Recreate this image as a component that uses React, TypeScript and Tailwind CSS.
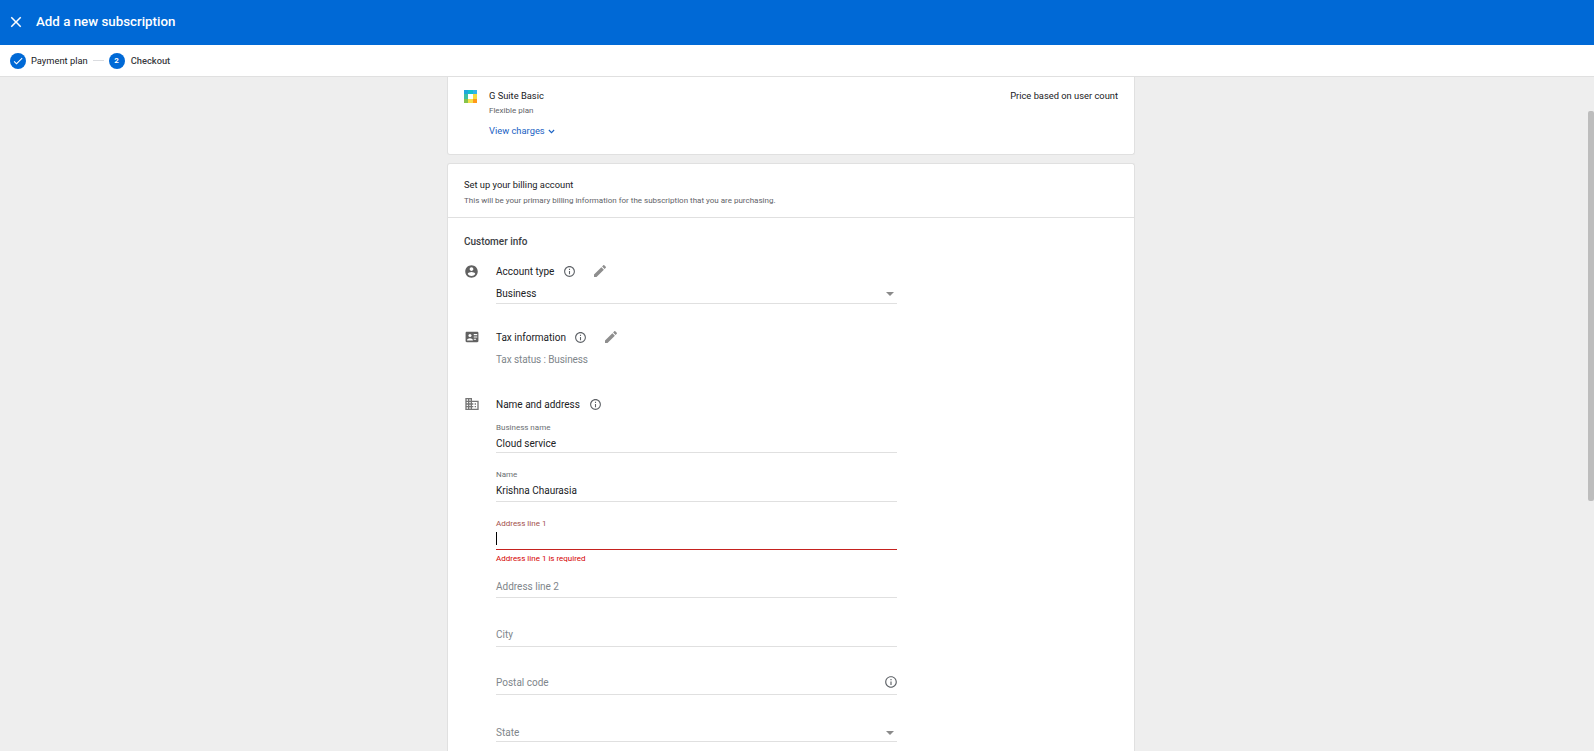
import React from 'react';

const Icon = ({ d, className }: { d: string; className: string }) => (
  <svg viewBox="0 0 24 24" className={className} fill="currentColor">
    <path d={d} />
  </svg>
);

const INFO = 'M11 7h2v2h-2zm0 4h2v6h-2zm1-9C6.48 2 2 6.48 2 12s4.48 10 10 10 10-4.48 10-10S17.52 2 12 2zm0 18c-4.41 0-8-3.59-8-8s3.59-8 8-8 8 3.59 8 8-3.59 8-8 8z';
const EDIT = 'M3 17.25V21h3.75L17.81 9.94l-3.75-3.75L3 17.25zM20.71 7.04c.39-.39.39-1.02 0-1.41l-2.34-2.34c-.39-.39-1.02-.39-1.41 0l-1.83 1.83 3.75 3.75 1.83-1.83z';
const ACCOUNT = 'M12 2C6.48 2 2 6.48 2 12s4.48 10 10 10 10-4.48 10-10S17.52 2 12 2zm0 3c1.66 0 3 1.34 3 3s-1.34 3-3 3-3-1.34-3-3 1.34-3 3-3zm0 14.2c-2.5 0-4.71-1.28-6-3.22.03-1.99 4-3.08 6-3.08 1.99 0 5.97 1.09 6 3.08-1.29 1.94-3.5 3.22-6 3.22z';
const DOMAIN = 'M12 7V3H2v18h20V7H12zM6 19H4v-2h2v2zm0-4H4v-2h2v2zm0-4H4V9h2v2zm0-4H4V5h2v2zm4 12H8v-2h2v2zm0-4H8v-2h2v2zm0-4H8V9h2v2zm0-4H8V5h2v2zm10 12h-8v-2h2v-2h-2v-2h2v-2h-2V9h8v10zm-2-8h-2v2h2v-2zm0 4h-2v2h2v-2z';

const Info = ({ className = '' }: { className?: string }) => (
  <Icon d={INFO} className={`w-[13px] h-[13px] text-[#5f6368] shrink-0 ${className}`} />
);

const Edit = ({ className = '' }: { className?: string }) => (
  <Icon d={EDIT} className={`w-[16px] h-[16px] text-[#8e8e8e] shrink-0 ${className}`} />
);

const Caret = () => (
  <svg viewBox="0 0 10 5" className="w-[8px] h-[4px] text-[#8a8a8a] mr-[3px] mt-[2px]" fill="currentColor">
    <path d="M0 0h10L5 5z" />
  </svg>
);

const ContactIcon = () => (
  <svg viewBox="0 0 24 24" className="w-[14px] h-[14px] text-[#616161] ml-px mt-[3px]" fill="currentColor">
    <path d="M21 3H3c-1.1 0-2 .9-2 2v14c0 1.1.9 2 2 2h18c1.1 0 2-.9 2-2V5c0-1.1-.9-2-2-2z" />
    <circle cx="8.5" cy="9.5" r="2.6" fill="#fff" />
    <path d="M3.5 17.5c0-2 3.3-3.2 5-3.2s5 1.2 5 3.2v.5h-10zM15 7h6v1.8h-6zM15 11h6v1.8h-6zM15 15h4v1.8h-4z" fill="#fff" />
  </svg>
);

const Logo = () => (
  <svg viewBox="0 0 13 13" className="w-[13px] h-[13px] mt-[1px] shrink-0">
    <rect x="0" y="0" width="4" height="4" fill="#1ea7dc" />
    <rect x="4" y="0" width="5" height="4" fill="#14c0cc" />
    <rect x="9" y="0" width="4" height="4" fill="#35b3ea" />
    <rect x="0" y="4" width="4" height="5" fill="#3dbfa2" />
    <rect x="4" y="4" width="5" height="5" fill="#ffffff" />
    <rect x="9" y="4" width="4" height="5" fill="#f8dc3f" />
    <rect x="0" y="9" width="4" height="4" fill="#86c34a" />
    <rect x="4" y="9" width="5" height="4" fill="#f5e04a" />
    <rect x="9" y="9" width="4" height="4" fill="#ff981a" />
  </svg>
);

const Field = ({
  label,
  value,
  placeholder,
  right,
  className = '',
  textClassName = 'bottom-[2px]',
}: {
  label?: string;
  value?: string;
  placeholder?: string;
  right?: React.ReactNode;
  className?: string;
  textClassName?: string;
}) => (
  <div className={`w-[401px] border-b border-[#e0e0e0] relative ${className}`}>
    {label && <div className="absolute left-0 top-0 text-[8px] leading-[11px] text-[#6b6f73]">{label}</div>}
    <div className={`absolute left-0 right-0 flex items-center justify-between h-[14px] ${textClassName}`}>
      {value && <span className="text-[10px] text-[#202124]">{value}</span>}
      {placeholder && <span className="text-[10px] text-[#80868b]">{placeholder}</span>}
      {right}
    </div>
  </div>
);

export default function App() {
  return (
    <div className="h-[751px] w-[1594px] overflow-hidden flex flex-col bg-[#eeeeee] relative font-['Roboto',sans-serif]">
      <header className="h-[45px] bg-[#0069d6] flex items-center shrink-0 pb-[2px]">
        <svg viewBox="0 0 24 24" className="w-[18px] h-[18px] ml-[7px] text-white" fill="currentColor">
          <path d="M19 6.41 17.59 5 12 10.59 6.41 5 5 6.41 10.59 12 5 17.59 6.41 19 12 13.41 17.59 19 19 17.59 13.41 12z" />
        </svg>
        <h1 className="ml-[11px] text-[13.33px] font-medium text-white">Add a new subscription</h1>
      </header>

      <nav className="h-[32px] bg-white border-b border-[#e0e0e0] flex items-center shrink-0 pl-[10px]">
        <span className="w-[16px] h-[16px] rounded-full bg-[#0069d6] flex items-center justify-center">
          <svg viewBox="0 0 24 24" className="w-[12px] h-[12px] text-white" fill="currentColor">
            <path d="M9 16.17 4.83 12l-1.42 1.41L9 19 21 7l-1.41-1.41z" />
          </svg>
        </span>
        <span className="ml-[5px] text-[9.33px] text-[#202124]">Payment plan</span>
        <span className="ml-[5px] w-[11px] h-px bg-[#dadce0]" />
        <span className="ml-[5px] w-[16px] h-[16px] rounded-full bg-[#0069d6] flex items-center justify-center text-[8px] font-bold text-white">2</span>
        <span className="ml-[6px] text-[9.33px] font-medium text-[#3c4043]">Checkout</span>
      </nav>

      <main className="flex-1 overflow-hidden flex flex-col items-center pr-[12px]">
        <div className="w-[688px]">
          <section className="h-[78px] bg-white border-x border-b border-[#e0e0e0] rounded-b-[3px] px-[16px] pt-[12px] flex justify-between">
            <div className="flex">
              <Logo />
              <div className="ml-[12px]">
                <div className="text-[9.33px] leading-[14px] text-[#202124]">G Suite Basic</div>
                <div className="mt-[2px] text-[8px] leading-[12px] text-[#5f6368]">Flexible plan</div>
                <div className="mt-[7px] flex items-center text-[9.33px] leading-[14px] text-[#1a62c4]">
                  View charges
                  <svg viewBox="0 0 24 24" className="ml-[2px] w-[9px] h-[9px]" fill="none" stroke="currentColor" strokeWidth="3">
                    <path d="m5 8 7 7 7-7" />
                  </svg>
                </div>
              </div>
            </div>
            <div className="text-[9.33px] leading-[14px] text-[#202124]">Price based on user count</div>
          </section>

          <section className="mt-[8px] bg-white border-x border-t border-[#e0e0e0] rounded-t-[3px]">
            <div className="h-[54px] border-b border-[#e0e0e0] px-[16px] pt-[14px]">
              <div className="text-[9.33px] leading-[14px] text-[#202124]">Set up your billing account</div>
              <div className="mt-[3px] text-[8px] leading-[12px] text-[#5f6368]">
                This will be your primary billing information for the subscription that you are purchasing.
              </div>
            </div>

            <div className="px-[16px] pt-[17px]">
              <div className="text-[10px] leading-[14px] font-medium text-[#3c4043]">Customer info</div>

              <div className="flex mt-[12px]">
                <div className="w-[32px] shrink-0">
                  <Icon d={ACCOUNT} className="w-[15px] h-[15px] text-[#616161] mt-[3px]" />
                </div>
                <div>
                  <div className="flex items-center h-[20px]">
                    <span className="text-[10px] text-[#202124]">Account type</span>
                    <Info className="ml-[9px]" />
                    <Edit className="ml-[16px]" />
                  </div>
                  <Field value="Business" right={<Caret />} className="h-[20px] mt-[3px]" textClassName="bottom-[3px]" />
                </div>
              </div>

              <div className="flex mt-[23px]">
                <div className="w-[32px] shrink-0">
                  <ContactIcon />
                </div>
                <div>
                  <div className="flex items-center h-[20px]">
                    <span className="text-[10px] text-[#202124]">Tax information</span>
                    <Info className="ml-[8px]" />
                    <Edit className="ml-[16px]" />
                  </div>
                  <div className="mt-[6px] text-[10px] leading-[14px] tracking-[-0.1px] text-[#80868b]">Tax status : Business</div>
                </div>
              </div>

              <div className="flex mt-[27px]">
                <div className="w-[32px] shrink-0">
                  <Icon d={DOMAIN} className="w-[16px] h-[16px] text-[#757575] mt-[2px]" />
                </div>
                <div>
                  <div className="flex items-center h-[20px]">
                    <span className="text-[10px] text-[#202124]">Name and address</span>
                    <Info className="ml-[9px]" />
                  </div>
                  <Field label="Business name" value="Cloud service" className="h-[31px] mt-[8px]" />
                  <Field label="Name" value="Krishna Chaurasia" className="h-[33px] mt-[16px]" textClassName="bottom-[4px]" />
                  <div className="w-[401px] h-[33px] mt-[15px] border-b border-[#c5221f] relative">
                    <div className="absolute left-0 top-[1px] text-[8px] leading-[11px] text-[#a3504c]">Address line 1</div>
                    <div className="absolute left-0 bottom-[4px] w-px h-[13px] bg-black" />
                  </div>
                  <div className="mt-[3px] text-[8px] leading-[11px] text-[#d50000]">Address line 1 is required</div>
                  <Field placeholder="Address line 2" className="h-[25px] mt-[9px]" textClassName="bottom-[4px]" />
                  <Field placeholder="City" className="h-[33px] mt-[16px]" textClassName="bottom-[5px]" />
                  <Field placeholder="Postal code" right={<Info className="w-[14px] h-[14px] -mr-px" />} className="h-[33px] mt-[15px]" textClassName="bottom-[5px]" />
                  <Field placeholder="State" right={<Caret />} className="h-[33px] mt-[14px]" />
                </div>
              </div>
              <div className="h-[60px]" />
            </div>
          </section>
        </div>
      </main>

      <div className="absolute right-0 top-[111px] w-[6px] h-[390px] bg-[#bdbdbd] rounded-[2px]" />
    </div>
  );
}
